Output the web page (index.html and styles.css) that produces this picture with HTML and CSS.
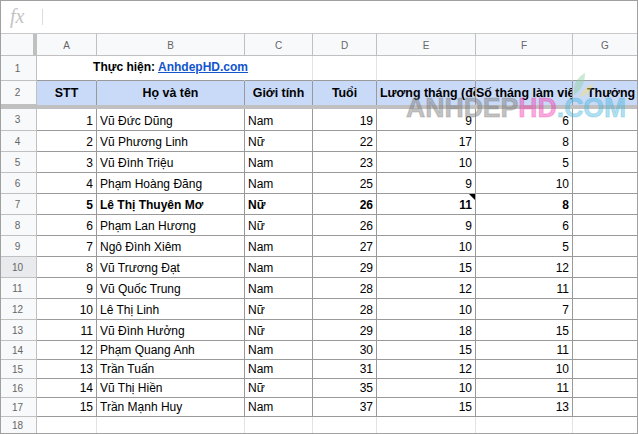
FILE: index.html
```html
<!DOCTYPE html>
<html lang="vi">
<head>
<meta charset="utf-8">
<title>Sheet</title>
<link rel="stylesheet" href="styles.css">
</head>
<body>
<div class="frame">
  <div class="fbar"><span class="fx">fx</span><span class="fsep"></span></div>
  <div class="sheet">
    <div class="corner"></div>
    <div class="ch">A</div><div class="ch">B</div><div class="ch">C</div><div class="ch">D</div><div class="ch">E</div><div class="ch">F</div><div class="ch">G</div>

    <div class="rn">1</div>
    <div class="c t1 nob"></div>
    <div class="c t1 title nob"><b>Thực hiện: <a class="link" href="#">AnhdepHD.com</a></b></div>
    <div class="c t1"></div><div class="c t1"></div><div class="c t1"></div><div class="c t1"></div><div class="c t1 last"></div>

    <div class="rn">2</div>
    <div class="c hd">STT</div>
    <div class="c hd">Họ và tên</div>
    <div class="c hd">Giới tính</div>
    <div class="c hd">Tuổi</div>
    <div class="c hd hl">Lương tháng (đồng)</div>
    <div class="c hd hf">Số tháng làm việc</div>
    <div class="c hd hg last">Thưởng tết</div>

    <div class="freeze"></div>

    <div class="rn">3</div><div class="c n">1</div><div class="c">Vũ Đức Dũng</div><div class="c">Nam</div><div class="c n">19</div><div class="c n">9</div><div class="c n">6</div><div class="c last"></div>
    <div class="rn">4</div><div class="c n">2</div><div class="c">Vũ Phương Linh</div><div class="c">Nữ</div><div class="c n">22</div><div class="c n">17</div><div class="c n">8</div><div class="c last"></div>
    <div class="rn">5</div><div class="c n">3</div><div class="c">Vũ Đình Triệu</div><div class="c">Nam</div><div class="c n">23</div><div class="c n">10</div><div class="c n">5</div><div class="c last"></div>
    <div class="rn">6</div><div class="c n">4</div><div class="c">Phạm Hoàng Đăng</div><div class="c">Nam</div><div class="c n">25</div><div class="c n">9</div><div class="c n">10</div><div class="c last"></div>
    <div class="rn">7</div><div class="c n b">5</div><div class="c b">Lê Thị Thuyên Mơ</div><div class="c b">Nữ</div><div class="c n b">26</div><div class="c n b note">11</div><div class="c n b">8</div><div class="c last"></div>
    <div class="rn">8</div><div class="c n">6</div><div class="c">Phạm Lan Hương</div><div class="c">Nữ</div><div class="c n">26</div><div class="c n">9</div><div class="c n">6</div><div class="c last"></div>
    <div class="rn">9</div><div class="c n">7</div><div class="c">Ngô Đình Xiêm</div><div class="c">Nam</div><div class="c n">27</div><div class="c n">10</div><div class="c n">5</div><div class="c last"></div>
    <div class="rn hover">10</div><div class="c n">8</div><div class="c">Vũ Trương Đạt</div><div class="c">Nam</div><div class="c n">29</div><div class="c n">15</div><div class="c n">12</div><div class="c last"></div>
    <div class="rn">11</div><div class="c n">9</div><div class="c">Vũ Quốc Trung</div><div class="c">Nam</div><div class="c n">28</div><div class="c n">12</div><div class="c n">11</div><div class="c last"></div>
    <div class="rn">12</div><div class="c n">10</div><div class="c">Lê Thị Linh</div><div class="c">Nữ</div><div class="c n">28</div><div class="c n">10</div><div class="c n">7</div><div class="c last"></div>
    <div class="rn">13</div><div class="c n">11</div><div class="c">Vũ Đình Hưởng</div><div class="c">Nữ</div><div class="c n">29</div><div class="c n">18</div><div class="c n">15</div><div class="c last"></div>
    <div class="rn">14</div><div class="c n">12</div><div class="c">Phạm Quang Anh</div><div class="c">Nam</div><div class="c n">30</div><div class="c n">15</div><div class="c n">11</div><div class="c last"></div>
    <div class="rn">15</div><div class="c n">13</div><div class="c">Trần Tuấn</div><div class="c">Nam</div><div class="c n">31</div><div class="c n">12</div><div class="c n">10</div><div class="c last"></div>
    <div class="rn">16</div><div class="c n">14</div><div class="c">Vũ Thị Hiền</div><div class="c">Nữ</div><div class="c n">35</div><div class="c n">10</div><div class="c n">11</div><div class="c last"></div>
    <div class="rn">17</div><div class="c n">15</div><div class="c">Trần Mạnh Huy</div><div class="c">Nam</div><div class="c n">37</div><div class="c n">15</div><div class="c n">13</div><div class="c last"></div>

    <div class="rn end">18</div>
    <div class="c e"></div><div class="c e"></div><div class="c e"></div><div class="c e"></div><div class="c e"></div><div class="c e"></div><div class="c e last"></div>
  </div>

  <div class="wm"><span class="wg">ANHDEP</span><span class="wp">HD</span><span class="wb">.COM</span></div>
  <svg class="leaf" width="24" height="28" viewBox="0 0 24 28">
    <path d="M3 24 C2 14 6 6 14 2 C14 12 10 20 3 24 Z" fill="#8fd19e" opacity="0.45"/>
    <path d="M8 26 C12 18 17 14 23 13 C20 20 15 25 8 26 Z" fill="#f3e07a" opacity="0.5"/>
  </svg>
</div>
</body>
</html>
```

FILE: styles.css
```css
* { box-sizing: border-box; }
html, body { margin: 0; padding: 0; background: #fff; }
body { font-family: "Liberation Sans", Arial, sans-serif; }

.frame {
  position: relative;
  width: 638px;
  height: 434px;
  border: 1px solid #a0a0a0;
  overflow: hidden;
  background: #fff;
}

.fbar {
  height: 33px;
  border-bottom: 1px solid #c8c8c8;
  display: flex;
  align-items: center;
  padding-left: 9px;
}
.fx {
  font-family: "Liberation Serif", serif;
  font-style: italic;
  font-size: 20px;
  color: #c4c4c4;
  width: 32px;
  line-height: 20px;
  margin-top: -2px;
}
.fsep {
  width: 1px;
  height: 16px;
  background: #dadce0;
}

.sheet {
  display: grid;
  grid-template-columns: 36px 60px 148px 68px 64px 99px 97px 64px;
  grid-template-rows: 22px 25px 24px 4px 22px repeat(10, 21px) repeat(4, 19px) 16px;
}

.corner {
  background: #f8f9fa;
  border-right: 4px solid #c0c0c0;
  border-bottom: 1px solid #c0c0c0;
}
.ch {
  background: #f8f9fa;
  border-right: 1px solid #c0c0c0;
  border-bottom: 1px solid #c0c0c0;
  color: #666;
  font-size: 10px;
  display: flex;
  align-items: center;
  justify-content: center;
  padding-top: 1px;
}
.ch:nth-child(8) { border-right: none; }

.rn {
  grid-column: 1;
  background: #f8f9fa;
  border-right: 1px solid #c0c0c0;
  border-bottom: 1px solid #c0c0c0;
  color: #666;
  font-size: 10px;
  display: flex;
  align-items: center;
  justify-content: center;
  padding-right: 2px;
}
.rn.hover { background: #e8eaed; }
.rn.end { border-bottom: none; }

.c {
  border-right: 1px solid #9a9a9a;
  border-bottom: 1px solid #9a9a9a;
  font-size: 12px;
  line-height: 15px;
  color: #000;
  display: flex;
  align-items: flex-end;
  padding: 0 3px 1px 3px;
  white-space: nowrap;
  overflow: hidden;
}
.c.last { border-right: none; }
.c.n { justify-content: flex-end; }
.c.b { font-weight: bold; }
.c.note { position: relative; }
.c.note::after {
  content: "";
  position: absolute;
  top: 0;
  right: 0;
  border-top: 6px solid #000;
  border-left: 6px solid transparent;
}

.c.t1 {
  border-right: 1px solid #e2e3e3;
  border-bottom: 1px solid #9a9a9a;
  align-items: center;
}
.c.t1.nob { border-right-color: transparent; }
.c.t1.last { border-right: none; }
.c.title {
  overflow: visible;
  justify-content: center;
  position: relative;
  z-index: 1;
  padding-top: 0;
}
.link { color: #1155cc; text-decoration: underline; }

.c.hd {
  background: #c9daf8;
  font-weight: bold;
  font-size: 12.4px;
  border-bottom: none;
  align-items: center;
  justify-content: center;
  padding: 0;
}
.c.hd.last { border-right: none; }
.c.hl { justify-content: flex-start; padding-left: 3px; }
.c.hf { justify-content: flex-start; padding-left: 0; }
.c.hg { justify-content: flex-start; padding-left: 14px; }

.freeze {
  grid-column: 1 / -1;
  background: #c0c0c0;
}

.c.e {
  border-right: 1px solid #e2e3e3;
  border-bottom: none;
}
.c.e.last { border-right: none; }

.wm {
  position: absolute;
  left: 405px;
  top: 92px;
  font-family: "Liberation Sans", Arial, sans-serif;
  font-weight: bold;
  font-size: 28px;
  line-height: 30px;
  white-space: nowrap;
  pointer-events: none;
  transform: scaleX(0.95);
  transform-origin: left top;
}
.wg { color: rgba(120, 120, 120, 0.45); -webkit-text-stroke: 1.2px rgba(120, 120, 120, 0.3); }
.wp { color: rgba(240, 50, 170, 0.42); -webkit-text-stroke: 1.2px rgba(240, 50, 170, 0.28); }
.wb { color: rgba(70, 180, 220, 0.42); -webkit-text-stroke: 1.2px rgba(70, 180, 220, 0.28); }

.leaf {
  position: absolute;
  left: 570px;
  top: 70px;
  pointer-events: none;
}
```
